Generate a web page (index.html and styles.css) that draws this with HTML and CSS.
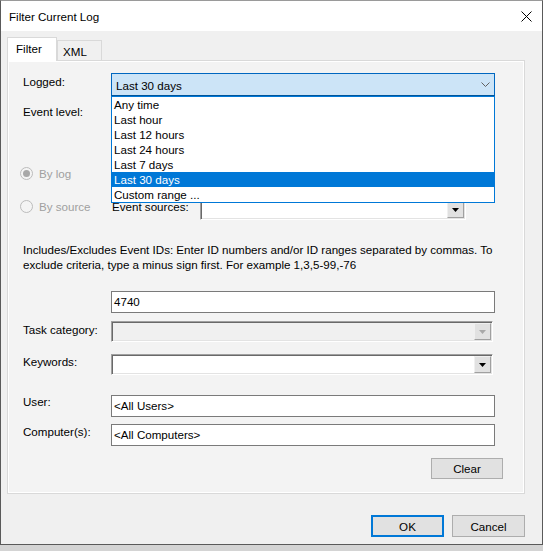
FILE: index.html
```html
<!DOCTYPE html>
<html>
<head>
<meta charset="utf-8">
<link rel="stylesheet" href="styles.css">
</head>
<body>
<div class="window">
  <div class="titlebar">
    <span class="title">Filter Current Log</span>
    <svg class="close" width="11" height="11" viewBox="0 0 11 11"><path d="M0.5 0.5L10.5 10.5M10.5 0.5L0.5 10.5" stroke="#000" stroke-width="1" fill="none"/></svg>
  </div>
  <div class="client">
    <div class="tabs">
      <div class="tab tab-active">Filter</div>
      <div class="tab tab-xml">XML</div>
    </div>
    <div class="panel">
      <div class="row row-logged">
        <div class="label label-top">Logged:</div>
        <div class="combo-open">
          <span class="combo-text">Last 30 days</span>
          <svg width="9" height="5" viewBox="0 0 9 5"><path d="M0.5 0.5L4.5 4.5L8.5 0.5" stroke="#606060" fill="none"/></svg>
          <ul class="droplist">
            <li>Any time</li>
            <li>Last hour</li>
            <li>Last 12 hours</li>
            <li>Last 24 hours</li>
            <li>Last 7 days</li>
            <li class="sel">Last 30 days</li>
            <li>Custom range ...</li>
          </ul>
        </div>
      </div>
      <div class="row row-level">
        <div class="label label-top">Event level:</div>
      </div>
      <div class="radio-row row-bylog">
        <span class="radio checked"></span><span class="radio-text">By log</span>
      </div>
      <div class="row row-bysource">
        <div class="radio-row radio-cell">
          <span class="radio"></span><span class="radio-text">By source</span>
        </div>
        <div class="src-label">Event sources:</div>
        <div class="combo3d combo-src">
          <span class="dropbtn"><svg width="7" height="4" viewBox="0 0 7 4"><path d="M0 0H7L3.5 4Z" fill="#000"/></svg></span>
        </div>
      </div>
      <p class="help">Includes/Excludes Event IDs: Enter ID numbers and/or ID ranges separated by commas. To<br>exclude criteria, type a minus sign first. For example 1,3,5-99,-76</p>
      <div class="row row-ids">
        <div class="label"></div>
        <div class="textfield">4740</div>
      </div>
      <div class="row row-task">
        <div class="label label-task">Task category:</div>
        <div class="combo3d combo-wide combo-disabled">
          <span class="dropbtn"><svg width="7" height="4" viewBox="0 0 7 4"><path d="M0 0H7L3.5 4Z" fill="#a8a8a8"/></svg></span>
        </div>
      </div>
      <div class="row row-keywords">
        <div class="label">Keywords:</div>
        <div class="combo3d combo-wide">
          <span class="dropbtn"><svg width="7" height="4" viewBox="0 0 7 4"><path d="M0 0H7L3.5 4Z" fill="#000"/></svg></span>
        </div>
      </div>
      <div class="row row-user">
        <div class="label label-user">User:</div>
        <div class="textfield">&lt;All Users&gt;</div>
      </div>
      <div class="row row-computer">
        <div class="label">Computer(s):</div>
        <div class="textfield">&lt;All Computers&gt;</div>
      </div>
      <div class="actions">
        <div class="button btn-clear">Clear</div>
      </div>
    </div>
    <div class="footer">
      <div class="button btn-default">OK</div>
      <div class="button">Cancel</div>
    </div>
  </div>
</div>
</body>
</html>
```
FILE: styles.css
```css
html, body {
  margin: 0;
  padding: 0;
}
body {
  width: 543px;
  height: 551px;
  overflow: hidden;
  background: #d4d4d4;
  font-family: "Liberation Sans", Arial, sans-serif;
  font-size: 11.6px;
  color: #000;
}
.window {
  width: 543px;
  height: 545px;
  box-sizing: border-box;
  border: 1px solid #5a5a5a;
  border-top-color: #9a9a9a;
  background: #f0f0f0;
  display: flex;
  flex-direction: column;
}
.titlebar {
  flex: none;
  height: 30px;
  background: #fff;
  display: flex;
  align-items: center;
  justify-content: space-between;
  padding: 0 10px 0 8px;
}
.title {
  line-height: 15px;
  padding-top: 1px;
}
.close {
  display: block;
}
.client {
  flex: 1;
  display: flex;
  flex-direction: column;
  padding: 6px 0 0 6px;
}
.tabs {
  display: flex;
  align-items: flex-end;
  height: 23px;
}
.tab {
  box-sizing: border-box;
  border: 1px solid #d9d9d9;
  border-bottom: none;
  line-height: 15px;
}
.tab-active {
  position: relative;
  z-index: 2;
  width: 50px;
  height: 24px;
  margin-bottom: -1px;
  padding: 3px 0 0 8px;
  background: #fff;
}
.tab-xml {
  width: 45px;
  height: 20px;
  padding: 3px 0 0 5px;
  background: #f0f0f0;
}
.panel {
  width: 518px;
  height: 434px;
  box-sizing: border-box;
  border: 1px solid #d9d9d9;
  background: #f3f3f3;
  box-shadow: inset 1px 1px 0 #fff, inset -1px -1px 0 #fff;
  padding: 12px 0 0 15px;
  display: flex;
  flex-direction: column;
}
.row {
  display: flex;
  align-items: flex-start;
}
.label {
  flex: none;
  width: 88px;
  line-height: 15px;
}
.label-top {
  padding-top: 1px;
}
.combo-open {
  position: relative;
  width: 384px;
  height: 23px;
  box-sizing: border-box;
  border: 1px solid #0067c0;
  border-bottom-color: #005499;
  background: #cce4f7;
  padding: 0 4px 0 4px;
  line-height: 21px;
  display: flex;
  align-items: center;
  justify-content: space-between;
}
.combo-text {
  padding-top: 1px;
}
.combo-open svg {
  display: block;
}
.droplist {
  position: absolute;
  z-index: 10;
  top: calc(100% + 1px);
  left: -1px;
  width: 384px;
  box-sizing: border-box;
  margin: 0;
  padding: 0;
  list-style: none;
  background: #fff;
  border: 1px solid #0078d7;
  line-height: 16px;
}
.droplist li {
  height: 15px;
  padding-left: 2px;
}
.droplist li.sel {
  background: #0078d7;
  color: #fff;
}
.row-level {
  margin-top: 7px;
}
.radio-row {
  display: flex;
  align-items: center;
  gap: 6px;
  line-height: 15px;
  color: #a0a0a0;
  margin-left: -3px;
}
.radio-text {
  padding-top: 1px;
}
.row-bylog {
  margin-top: 46px;
}
.radio {
  flex: none;
  width: 13px;
  height: 13px;
  box-sizing: border-box;
  border: 1px solid #bcbcbc;
  border-radius: 50%;
  background: #f4f4f4;
  display: flex;
  align-items: center;
  justify-content: center;
}
.radio.checked::after {
  content: "";
  width: 7px;
  height: 7px;
  border-radius: 50%;
  background: #a8a8a8;
}
.row-bysource {
  margin-top: 18px;
}
.radio-cell {
  flex: none;
  width: 91px;
  margin-top: -1px;
}
.src-label {
  flex: none;
  width: 89px;
  box-sizing: border-box;
  padding: 0 0 0 1px;
  line-height: 15px;
}
.combo3d {
  flex: none;
  height: 21px;
  box-sizing: border-box;
  border: 1px solid;
  border-color: #a0a0a0 #ffffff #ffffff #a0a0a0;
  box-shadow: inset 1px 1px 0 #696969, inset -1px -1px 0 #e3e3e3;
  background: #fff;
  padding: 1px;
  display: flex;
  justify-content: flex-end;
}
.combo-src {
  width: 266px;
}
.combo-wide {
  width: 382px;
}
.combo-disabled {
  background: #f0f0f0;
}
.dropbtn {
  width: 17px;
  height: 17px;
  box-sizing: border-box;
  border: 1px solid;
  border-color: #f0f0f0 #a0a0a0 #a0a0a0 #f0f0f0;
  background: #e1e1e1;
  display: flex;
  align-items: center;
  justify-content: center;
}
.dropbtn svg {
  display: block;
}
.help {
  margin: 22px 0 0 0;
  line-height: 15px;
  white-space: nowrap;
}
.textfield {
  flex: none;
  width: 384px;
  height: 22px;
  box-sizing: border-box;
  border: 1px solid #7a7a7a;
  background: #fff;
  padding-left: 2px;
  line-height: 20px;
}
.row-ids {
  margin-top: 19px;
}
.row-task {
  margin-top: 8px;
}
.label-task {
  padding-top: 1px;
}
.row-keywords {
  margin-top: 12px;
}
.row-user {
  margin-top: 20px;
}
.label-user {
  margin-top: -1px;
}
.row-computer {
  margin-top: 7px;
}
.actions {
  margin-top: 12px;
  display: flex;
  justify-content: flex-end;
  padding-right: 21px;
}
.button {
  width: 73px;
  height: 22px;
  box-sizing: border-box;
  border: 1px solid #adadad;
  background: #e1e1e1;
  text-align: center;
  line-height: 21px;
}
.btn-clear {
  width: 72px;
  height: 21px;
  line-height: 20px;
}
.btn-default {
  border: 2px solid #0078d7;
  line-height: 19px;
}
.footer {
  margin-top: 21px;
  display: flex;
  justify-content: flex-end;
  gap: 8px;
  padding-right: 17px;
}
```
